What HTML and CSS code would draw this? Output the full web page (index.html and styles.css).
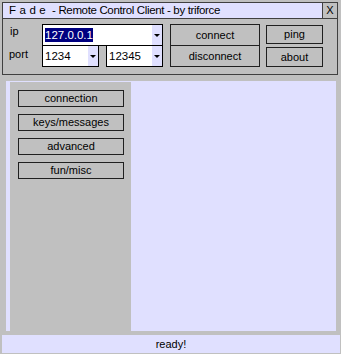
FILE: index.html
```html
<!DOCTYPE html>
<html lang="en">
  <head>
    <meta charset="UTF-8" />
    <title>Fade - Remote Control Client</title>
    <link rel="stylesheet" href="styles.css">
  </head>
  <body>
    <div class="window">
      <div class="titlebar">
        <div class="title"><span class="brand">Fade</span>&nbsp;- Remote Control Client - by triforce</div>
        <div class="close">X</div>
      </div>
      <div class="controls">
        <div class="labels">
          <div class="label ip">ip</div>
          <div class="label port">port</div>
        </div>
        <div class="fields">
          <div class="combo wide">
            <span class="value"><span class="selected">127.0.0.1</span></span>
            <span class="arrow"></span>
          </div>
          <div class="port-row">
            <div class="combo small">
              <span class="value">1234</span>
              <span class="arrow"></span>
            </div>
            <div class="combo small">
              <span class="value">12345</span>
              <span class="arrow"></span>
            </div>
          </div>
        </div>
        <div class="conn">
          <div class="btn">connect</div>
          <div class="btn stacked">disconnect</div>
        </div>
        <div class="misc">
          <div class="btn ping">ping</div>
          <div class="btn about">about</div>
        </div>
      </div>
    </div>

    <div class="workspace">
      <nav class="sidebar">
        <div class="btn nav">connection</div>
        <div class="btn nav">keys/messages</div>
        <div class="btn nav">advanced</div>
        <div class="btn nav">fun/misc</div>
      </nav>
      <section class="content"></section>
    </div>

    <div class="status">ready!</div>
  </body>
</html>
```

FILE: styles.css
```css
body {
  margin: 0;
  padding: 2px;
  width: 341px;
  height: 354px;
  box-sizing: border-box;
  overflow: hidden;
  background: #c0c0c0;
  font-family: 'Liberation Sans', Arial, sans-serif;
  font-size: 11px;
  color: #000;
}

.window {
  width: 336px;
  border: 1px solid #404040;
  box-sizing: border-box;
}

.titlebar {
  display: flex;
  height: 16px;
  border-bottom: 1px solid #404040;
  box-sizing: border-box;
}

.title {
  flex: 1;
  background: #e0e0ff;
  padding-left: 6px;
  line-height: 15px;
  font-size: 11.5px;
  letter-spacing: -0.35px;
  white-space: nowrap;
}

.brand {
  letter-spacing: 3.5px;
}

.close {
  width: 14px;
  border-left: 1px solid #404040;
  text-align: center;
  line-height: 15px;
}

.controls {
  display: flex;
  height: 55px;
}

.labels {
  width: 39px;
  padding-left: 7px;
  padding-top: 6px;
  box-sizing: border-box;
}

.label {
  line-height: 13px;
}

.label.port {
  margin-top: 10px;
  margin-left: -1px;
}

.fields {
  width: 121px;
  padding-top: 5px;
}

.combo {
  display: flex;
  height: 22px;
  border: 1px solid #000;
  box-sizing: border-box;
  background: #fff;
}

.combo .value {
  flex: 1;
  padding-left: 2px;
  line-height: 20px;
  font-size: 11.5px;
  overflow: hidden;
}

.selected {
  background: #000080;
  color: #fff;
  padding: 1px 0;
}

.combo .arrow {
  width: 10px;
  background: #e0e0ff;
  display: flex;
  align-items: center;
  justify-content: center;
}

.combo .arrow::after {
  content: '';
  border-left: 3px solid transparent;
  border-right: 3px solid transparent;
  border-top: 3px solid #000;
}

.port-row {
  display: flex;
  gap: 7px;
  margin-top: -1px;
}

.combo.small {
  width: 57px;
}

.btn {
  border: 1px solid #202020;
  box-sizing: border-box;
  background: #c0c0c0;
  text-align: center;
}

.conn {
  width: 90px;
  margin-left: 7px;
  padding-top: 5px;
}

.conn .btn {
  height: 22px;
  line-height: 20px;
}

.conn .btn.stacked {
  margin-top: -1px;
}

.misc {
  width: 57px;
  margin-left: 6px;
  padding-top: 6px;
}

.misc .ping {
  height: 19px;
  line-height: 17px;
}

.misc .about {
  height: 20px;
  line-height: 19px;
  margin-top: 3px;
}

.workspace {
  display: flex;
  width: 330px;
  height: 250px;
  margin: 6px 0 0 4px;
  padding: 1px 0 0 4px;
  box-sizing: border-box;
  background: #e0e0ff;
}

.sidebar {
  width: 121px;
  padding: 8px 0 0 8px;
  box-sizing: border-box;
  background: #c0c0c0;
  display: flex;
  flex-direction: column;
  gap: 7px;
}

.btn.nav {
  width: 106px;
  height: 17px;
  line-height: 15px;
}

.content {
  flex: 1;
}

.status {
  width: 338px;
  height: 18px;
  margin-top: 4px;
  background: #e0e0ff;
  text-align: center;
  line-height: 18px;
}
```
